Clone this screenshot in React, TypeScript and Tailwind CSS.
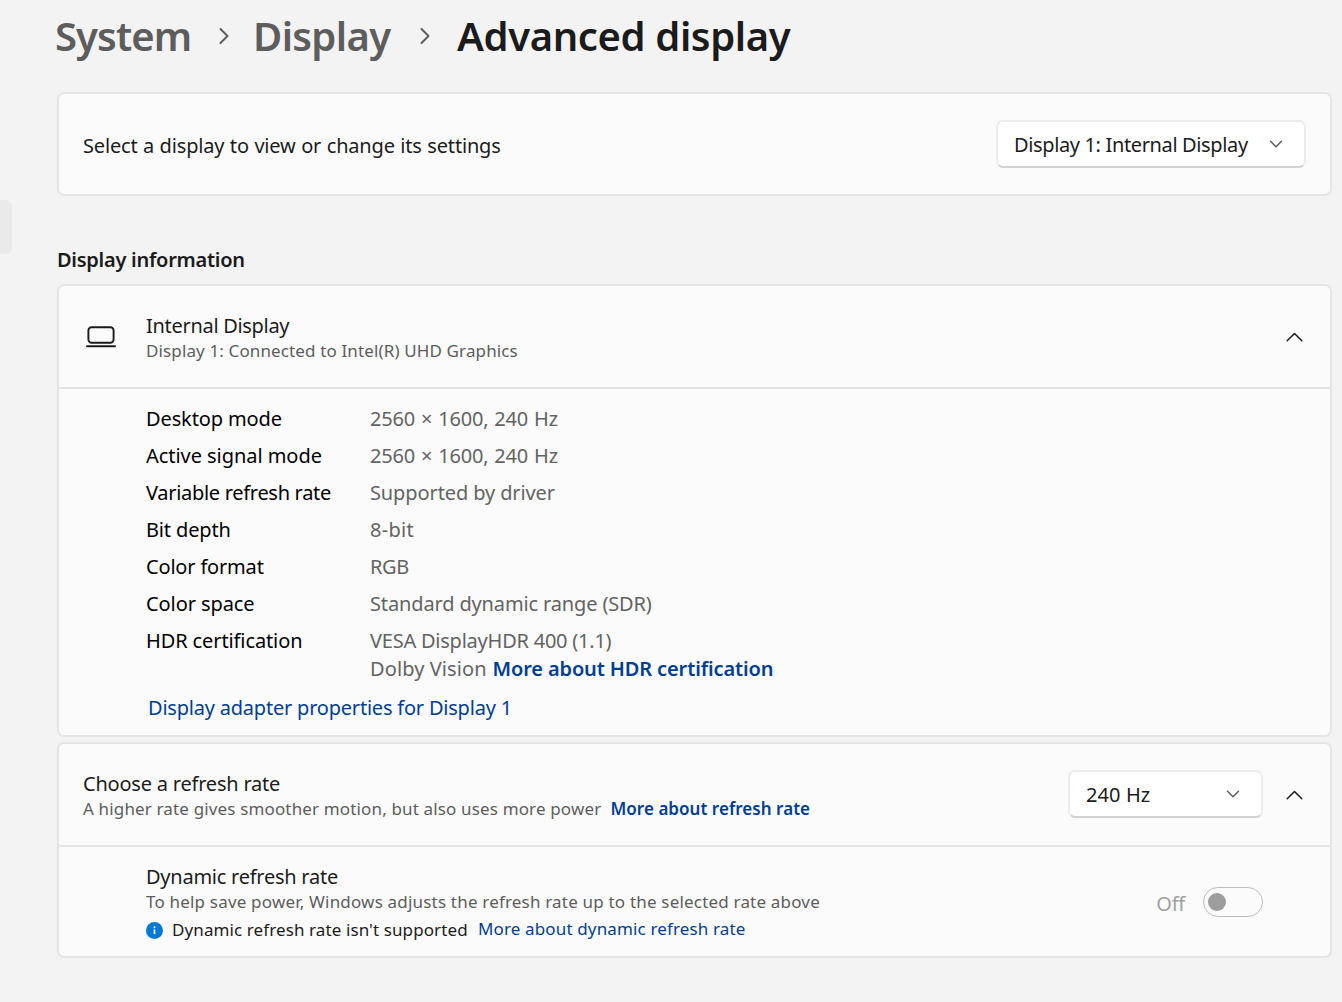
import type { ReactNode } from "react"

const details = [
  { label: "Desktop mode", value: "2560 × 1600, 240 Hz", labelClass: "tracking-[-0.12px]", valueClass: "tracking-[-0.2px] [word-spacing:1px]" },
  { label: "Active signal mode", value: "2560 × 1600, 240 Hz", labelClass: "tracking-[-0.05px]", valueClass: "tracking-[-0.2px] [word-spacing:1px]" },
  { label: "Variable refresh rate", value: "Supported by driver", labelClass: "tracking-[-0.3px]", valueClass: "tracking-[-0.11px]" },
  { label: "Bit depth", value: "8-bit", labelClass: "tracking-[-0.15px]", valueClass: "tracking-[0.3px]" },
  { label: "Color format", value: "RGB", labelClass: "tracking-[-0.18px]", valueClass: "tracking-[-0.4px]" },
  { label: "Color space", value: "Standard dynamic range (SDR)", labelClass: "tracking-[-0.08px]", valueClass: "tracking-[-0.14px]" },
]

function Card({ children, className = "" }: { children: ReactNode; className?: string }) {
  return (
    <section className={`w-[1275px] rounded-[7px] border-2 border-[#e5e5e5] bg-[#fbfbfb] ${className}`}>
      {children}
    </section>
  )
}

function Separator() {
  return (
    <svg width="12" height="18" viewBox="0 0 12 18" fill="none" stroke="#5d5d5d" strokeWidth="2" strokeLinecap="round" strokeLinejoin="round">
      <path d="M2.5 2l7 7-7 7" />
    </svg>
  )
}

function ChevronDown() {
  return (
    <svg width="14" height="8" viewBox="0 0 14 8" fill="none" stroke="#5d5d5d" strokeWidth="1.5" strokeLinecap="round" strokeLinejoin="round">
      <path d="M1.5 1.2L7 6.7l5.5-5.5" />
    </svg>
  )
}

function ChevronUp() {
  return (
    <svg width="18" height="10" viewBox="0 0 18 10" fill="none" stroke="#1b1b1b" strokeWidth="1.5" strokeLinecap="round" strokeLinejoin="round">
      <path d="M1.2 8.8L8.5 1.5l7.3 7.3" />
    </svg>
  )
}

function LaptopIcon() {
  return (
    <svg width="30" height="24" viewBox="0 0 30 24" fill="none" stroke="#1b1b1b" strokeWidth="1.9" strokeLinecap="round">
      <rect x="2.4" y="2.2" width="25.2" height="15.6" rx="3.2" />
      <path d="M1 21.2h28" />
    </svg>
  )
}

function Select({ children, className }: { children: ReactNode; className: string }) {
  return (
    <button className={`flex h-12 items-center justify-between rounded-[7px] border-2 border-[#ececec] border-b-[#d2d2d2] bg-white pb-px pl-[16px] text-[#1b1b1b] ${className}`}>
      <span className="pt-[2px]">{children}</span>
      <ChevronDown />
    </button>
  )
}

export default function App() {
  return (
    <div className="flex h-[1002px] w-[1342px] overflow-hidden bg-[#f3f3f3] font-['Noto_Sans','Open_Sans',sans-serif] text-[20px] leading-[28px] whitespace-nowrap text-[#1b1b1b]">
      {/* edge of the selected item in the navigation pane */}
      <div className="w-[57px] shrink-0 pt-[200px]">
        <div className="h-[54px] w-3 rounded-r-[6px] bg-[#eaeaea]" />
      </div>

      <main className="flex flex-col">
        <nav className="flex h-[92px] items-start text-[40px] leading-[56px] font-semibold text-[#5d5d5d]">
          <span className="mt-[8px] -ml-[2px] w-[163px] tracking-[-0.9px]">System</span>
          <span className="mt-[27px] w-[35px]"><Separator /></span>
          <span className="mt-[8px] w-[166px] tracking-[-0.65px]">Display</span>
          <span className="mt-[27px] w-[38px]"><Separator /></span>
          <h1 className="mt-[8px] tracking-[-0.38px] text-[#1b1b1b]">Advanced display</h1>
        </nav>

        <Card className="flex h-[104px] items-center justify-between pr-6 pl-6">
          <span className="mt-1 tracking-[-0.17px] [word-spacing:0.5px]">Select a display to view or change its settings</span>
          <Select className="w-[310px] pr-[21px] tracking-[-0.36px]">Display 1: Internal Display</Select>
        </Card>

        <h2 className="mt-[50px] mb-[10px] font-semibold tracking-[-0.27px]">Display information</h2>

        <Card className="h-[453px]">
          <div className="flex h-[103px] items-center border-b-2 border-[#e5e5e5] pr-[26px] pl-[27px]">
            <LaptopIcon />
            <div className="ml-[30px] flex-1">
              <div className="tracking-[-0.3px]">Internal Display</div>
              <div className="text-[17px] leading-[22px] tracking-[0.13px] text-[#5d5d5d]">Display 1: Connected to Intel(R) UHD Graphics</div>
            </div>
            <ChevronUp />
          </div>
          <dl className="pt-[16px] pl-[87px] text-black">
            {details.map((d) => (
              <div key={d.label} className="flex h-[37px]">
                <dt className={`w-[224px] ${d.labelClass}`}>{d.label}</dt>
                <dd className={`text-[#636363] ${d.valueClass}`}>{d.value}</dd>
              </div>
            ))}
            <div className="flex">
              <dt className="w-[224px] tracking-[-0.11px]">HDR certification</dt>
              <dd className="text-[#636363]">
                <div className="tracking-[-0.23px]">VESA DisplayHDR 400 (1.1)</div>
                <div className="flex">
                  <span className="w-[122.5px] tracking-[0.1px]">Dolby Vision</span>
                  <a className="font-semibold tracking-[-0.13px] text-[#003e92]">More about HDR certification</a>
                </div>
              </dd>
            </div>
          </dl>
          <a className="mt-[11px] ml-[89px] block tracking-[-0.21px] text-[#003e92]">Display adapter properties for Display 1</a>
        </Card>

        <Card className="mt-[5px] h-[216px]">
          <div className="flex h-[103px] items-center border-b-2 border-[#e5e5e5] pr-[26px] pl-6">
            <div className="flex-1">
              <div className="tracking-[-0.21px]">Choose a refresh rate</div>
              <div className="flex text-[17px] leading-[22px] text-[#5d5d5d]">
                <span className="w-[527.5px] tracking-[0.15px]">A higher rate gives smoother motion, but also uses more power</span>
                <a className="font-semibold tracking-[0.04px] text-[#003e92]">More about refresh rate</a>
              </div>
            </div>
            <Select className="mr-[23px] mb-px w-[195px] pr-[21px] tracking-[0.1px]">240 Hz</Select>
            <ChevronUp />
          </div>
          <div className="flex pr-[67px] pl-[87px]">
            <div className="flex-1 pt-[16px]">
              <div className="tracking-[-0.25px]">Dynamic refresh rate</div>
              <div className="text-[17px] leading-[22px] tracking-[0.19px] text-[#5d5d5d]">To help save power, Windows adjusts the refresh rate up to the selected rate above</div>
              <div className="mt-[4px] flex items-center text-[17px] leading-[22px]">
                <svg className="mt-[3px] mr-[9px]" width="17" height="17" viewBox="0 0 17 17">
                  <circle cx="8.5" cy="8.5" r="8.5" fill="#0078d4" />
                  <circle cx="8.5" cy="5.2" r="1" fill="white" />
                  <path d="M8.5 7.3v4.8" stroke="white" strokeWidth="1.6" />
                </svg>
                <span className="mt-[2px] w-[306px] tracking-[0.1px]">Dynamic refresh rate isn't supported</span>
                <a className="tracking-[0.14px] text-[#003e92]">More about dynamic refresh rate</a>
              </div>
            </div>
            <div className="mt-[40px] flex h-[30px] items-center">
              <span className="mt-[3px] mr-[18px] tracking-[-0.2px] text-[#a0a0a0]">Off</span>
              <div className="flex h-[30px] w-[60px] items-center rounded-full border-[1.5px] border-[#bdbdbd] pl-[4px]">
                <div className="size-[18px] rounded-full bg-[#9d9d9d]" />
              </div>
            </div>
          </div>
        </Card>
      </main>
    </div>
  )
}
